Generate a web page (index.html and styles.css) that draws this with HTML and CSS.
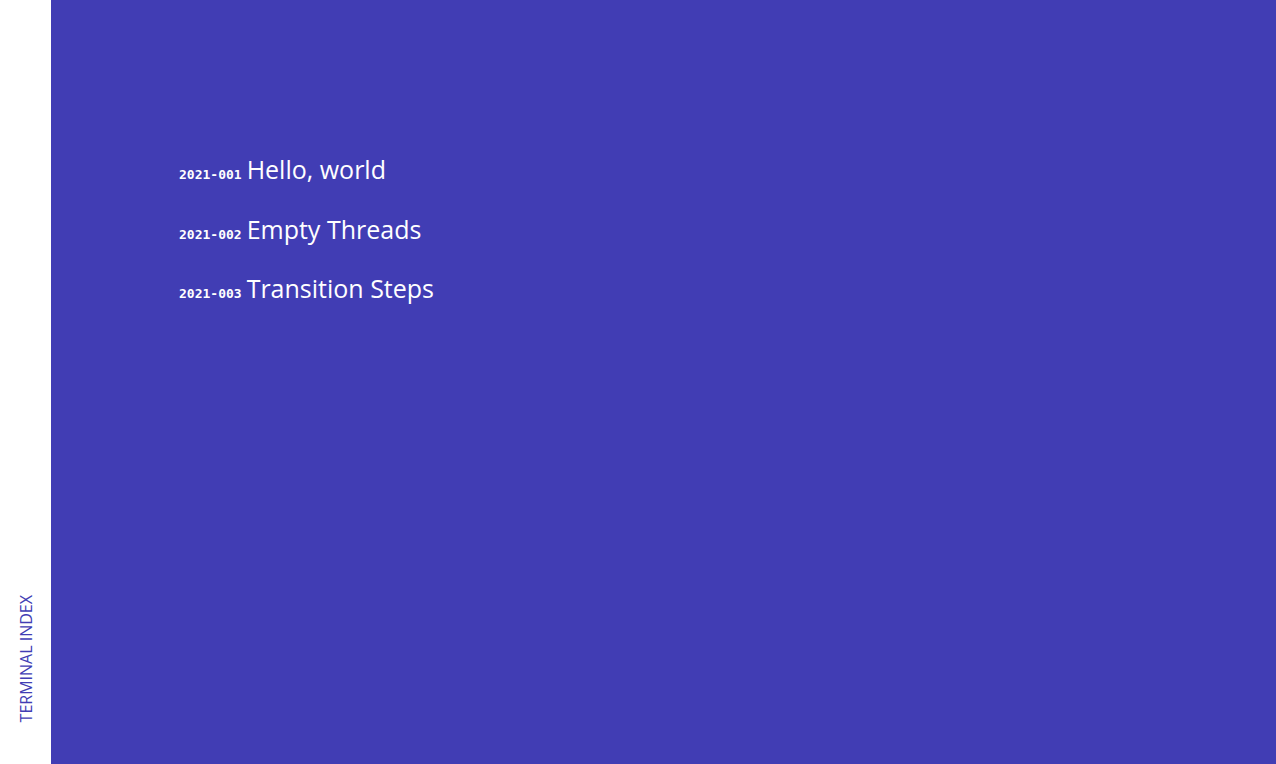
FILE: index.html
```html
<!DOCTYPE html>
<html lang="en">
<head>
<meta charset="utf-8">
<title>Terminal Index</title>
<link rel="stylesheet" href="styles.css">
</head>
<body>
<div class="page">
  <aside class="sidebar">
    <span class="brand">TERMINAL INDEX</span>
  </aside>
  <main class="main">
    <ul class="entries">
      <li class="entry"><span class="code">2021-001</span><a class="title" href="#">Hello, world</a></li>
      <li class="entry"><span class="code">2021-002</span><a class="title" href="#">Empty Threads</a></li>
      <li class="entry"><span class="code">2021-003</span><a class="title" href="#">Transition Steps</a></li>
    </ul>
  </main>
</div>
</body>
</html>
```
FILE: styles.css
```css
html, body {
  margin: 0;
  padding: 0;
  height: 100%;
}
body {
  font-family: "Open Sans", "Liberation Sans", sans-serif;
  background: #ffffff;
}
.page {
  display: flex;
  height: 100vh;
}
.sidebar {
  width: 51px;
  flex: none;
  display: flex;
  align-items: flex-end;
  justify-content: center;
  padding-bottom: 42px;
  box-sizing: border-box;
}
.brand {
  writing-mode: vertical-rl;
  transform: rotate(180deg);
  color: #413db4;
  font-size: 16px;
  line-height: 16px;
  letter-spacing: 0;
}
.main {
  flex: 1;
  background: #413db4;
  padding: 151px 0 0 128px;
}
.entries {
  list-style: none;
  margin: 0;
  padding: 0;
  display: flex;
  flex-direction: column;
  gap: 17.5px;
}
.entry {
  display: flex;
  align-items: baseline;
  gap: 5px;
  line-height: 36px;
}
.code {
  font-family: "DejaVu Sans Mono", "Liberation Mono", monospace;
  font-weight: bold;
  font-size: 13px;
  color: #ffffff;
}
.title {
  font-size: 25px;
  color: #ffffff;
  text-decoration: none;
}
```
